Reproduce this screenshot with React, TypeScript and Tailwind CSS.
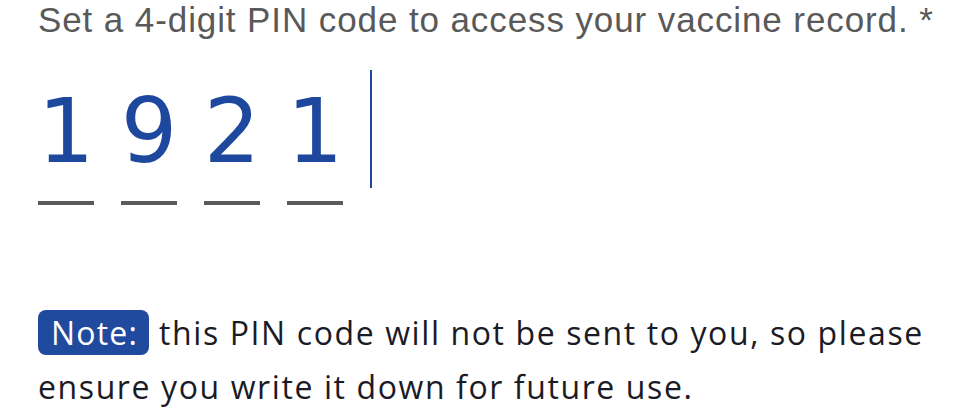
export default function App() {
    const digits = ["1", "9", "2", "1"];

    return (
        <div className="w-[980px] h-[418px] bg-white overflow-hidden pl-[38px]">
            {/* Label */}
            <p className="font-['Liberation_Sans',Arial,sans-serif] text-[35px] leading-[40px] tracking-[0.9px] text-[#595959] whitespace-nowrap">
                Set a 4-digit PIN code to access your vaccine record. *
            </p>

            {/* PIN input */}
            <div className="mt-[30px] flex items-start gap-[27px]">
                {digits.map((d, i) => (
                    <div key={i} className="w-[56px] pt-[11px] pb-5 border-b-4 border-[#5a5a5a] flex justify-center">
                        <span className="font-['DejaVu_Sans',sans-serif] text-[89px] leading-[100px] text-[#1e479e]">{d}</span>
                    </div>
                ))}
                <div className="w-[2px] h-[118px] bg-[#1e479e]" />
            </div>

            {/* Note */}
            <p className="mt-[101px] font-['Open_Sans','Noto_Sans',sans-serif] text-[32px] leading-[54px] tracking-[1.6px] text-[#1b1b26] whitespace-nowrap">
                <span className="bg-[#1f4a9e] text-white rounded-lg pl-[13px] pr-[11px] py-[1px] tracking-[1.2px]">Note:</span> this PIN code will not be sent to you, so please
                <br />
                ensure you write it down for future use.
            </p>
        </div>
    );
}
